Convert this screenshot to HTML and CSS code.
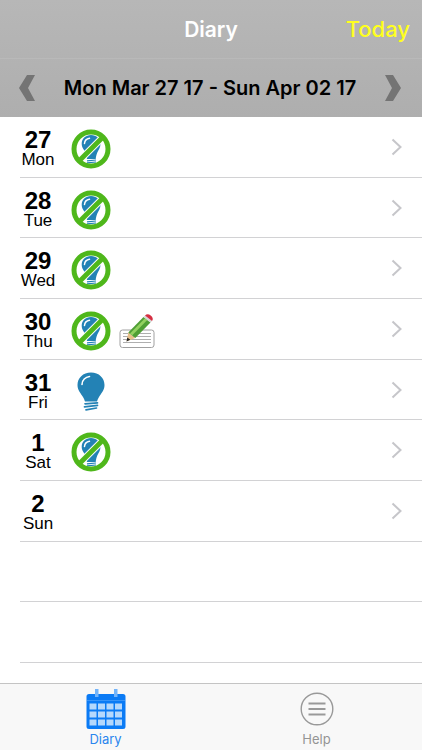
FILE: index.html
```html
<!DOCTYPE html>
<html lang="en">
<head>
    <meta charset="UTF-8">
    <meta name="viewport" content="width=device-width, initial-scale=1.0">
    <title>Diary</title>
    <link rel="stylesheet" href="styles.css">
</head>
<body>

    <!-- Shared icons -->
    <svg class="sprite" aria-hidden="true">
        <symbol id="bulb" viewBox="0 0 40 40">
            <path d="M20 .5C12 .5 6.500 6 6.500 13c0 5.500 3.500 8.500 5.500 12 1 1.700 1.500 3 2 4.500h12c.5-1.500 1-2.800 2-4.500 2-3.500 5.500-6.500 5.500-12C33.500 6 28 .5 20 .5z" fill="#2382b5"/>
            <path d="M11 12.500c0-4.500 3.500-7.500 7.500-8" fill="none" stroke="#fff" stroke-width="1.600" stroke-linecap="round"/>
            <path d="M14 31.800l12.500-1M13.500 34.800l13-1.500M15 37.800l10.500-1.800" fill="none" stroke="#2382b5" stroke-width="1.700" stroke-linecap="round"/>
        </symbol>
        <symbol id="no-bulb" viewBox="0 0 40 40">
            <path d="M20 6c-5.500 0-9.300 3.700-9.300 8.800 0 4 2.700 6.200 4 9.200.8 1.800 1 4 1.200 6h8.800c.3-2.500.7-4.300 1.500-6.300 1.200-2.800 3.300-5 3.300-8.700 0-5.300-4-9-9.500-9z" fill="#2382b5"/>
            <path d="M13.500 14.500c.3-3 2.300-4.800 5-5.200" fill="none" stroke="#fff" stroke-width="1.500" stroke-linecap="round"/>
            <path d="M16 31.800l9-.8M16 33.800l9-.8" fill="none" stroke="#2382b5" stroke-width="1.200"/>
            <path d="M32 8L8 32" stroke="#fff" stroke-width="6.800"/>
            <circle cx="20" cy="20" r="17" fill="none" stroke="#4fb71b" stroke-width="5"/>
            <path d="M32 8L8 32" stroke="#4fb71b" stroke-width="5"/>
        </symbol>
        <symbol id="note" viewBox="0 0 36 36">
            <rect x="1" y="17" width="34" height="17.500" rx="2.500" fill="#fff" stroke="#a0a0a0"/>
            <path d="M4 20.500h28M4 23.500h28M4 26.500h28M4 29.500h28" stroke="#9b9b9b" stroke-width=".8"/>
            <path d="M7.500 28.500l1.800-9 7 5.500z" fill="#e8c08a"/>
            <path d="M7.500 28.500l.8-4 3 2.200z" fill="#222"/>
            <path d="M9.300 19.500L24.500 4l7 5.500-15.200 15.500z" fill="#4f9f35"/>
            <path d="M11 20.500L26 5.200l2.300 1.800-15 15.300z" fill="#92d160"/>
            <path d="M24.500 4l1.500-1.500 7 5.500-1.500 1.500z" fill="#d5d5d5"/>
            <path d="M26 2.500c1.600-1.700 3.600-1.700 5.700-.1s2.800 3.700 1.300 5.600z" fill="#d52f42"/>
        </symbol>
        <symbol id="chevron" viewBox="0 0 12 18">
            <path d="M1.500 1.500L9.500 9l-8 7.500" fill="none" stroke="#c6c6ca" stroke-width="2"/>
        </symbol>
        <symbol id="arrow" viewBox="0 0 16 26">
            <path d="M0 0h8l8 13-8 13H0l7-13z" fill="#747474"/>
        </symbol>
    </svg>

    <div class="app">
        <header class="header">
            <div class="navbar">
                <h1 class="title">Diary</h1>
                <button type="button" class="today">Today</button>
            </div>
            <div class="week">
                <button type="button" class="week-btn" aria-label="Previous week">
                    <svg class="arrow arrow-prev"><use href="#arrow"/></svg>
                </button>
                <h2 class="range">Mon Mar 27 17 - Sun Apr 02 17</h2>
                <button type="button" class="week-btn" aria-label="Next week">
                    <svg class="arrow"><use href="#arrow"/></svg>
                </button>
            </div>
        </header>

        <!-- Days of the week -->
        <main class="days">
            <a class="day" href="#">
                <span class="date"><b class="num">27</b><span class="name">Mon</span></span>
                <svg class="status"><use href="#no-bulb"/></svg>
                <svg class="chevron"><use href="#chevron"/></svg>
            </a>
            <a class="day" href="#">
                <span class="date"><b class="num">28</b><span class="name">Tue</span></span>
                <svg class="status"><use href="#no-bulb"/></svg>
                <svg class="chevron"><use href="#chevron"/></svg>
            </a>
            <a class="day" href="#">
                <span class="date"><b class="num">29</b><span class="name">Wed</span></span>
                <svg class="status"><use href="#no-bulb"/></svg>
                <svg class="chevron"><use href="#chevron"/></svg>
            </a>
            <a class="day" href="#">
                <span class="date"><b class="num">30</b><span class="name">Thu</span></span>
                <svg class="status"><use href="#no-bulb"/></svg>
                <svg class="note"><use href="#note"/></svg>
                <svg class="chevron"><use href="#chevron"/></svg>
            </a>
            <a class="day" href="#">
                <span class="date"><b class="num">31</b><span class="name">Fri</span></span>
                <svg class="status"><use href="#bulb"/></svg>
                <svg class="chevron"><use href="#chevron"/></svg>
            </a>
            <a class="day" href="#">
                <span class="date"><b class="num">1</b><span class="name">Sat</span></span>
                <svg class="status"><use href="#no-bulb"/></svg>
                <svg class="chevron"><use href="#chevron"/></svg>
            </a>
            <a class="day" href="#">
                <span class="date"><b class="num">2</b><span class="name">Sun</span></span>
                <svg class="chevron"><use href="#chevron"/></svg>
            </a>
            <div class="day"></div>
            <div class="day"></div>
            <div class="rest"></div>
        </main>

        <nav class="tabs">
            <a class="tab active" href="#">
                <svg class="tab-icon" viewBox="0 0 40 40">
                    <path d="M3 5h34a2.500 2.500 0 0 1 2.500 2.500v30A2.500 2.500 0 0 1 37 40H3a2.500 2.500 0 0 1-2.500-2.500v-30A2.500 2.500 0 0 1 3 5z" fill="#0b7bf5"/>
                    <path d="M1 11.500h38" stroke="#3995f8"/>
                    <path d="M9 0h3.500v8H9zM28 0h3.500v8H28z" fill="#73b4fa"/>
                    <path d="M3.500 14.500h7v6h-7zM12 14.500h7v6h-7zM20.500 14.500h7v6h-7zM29 14.500h7v6h-7zM3.500 22.500h7v6h-7zM12 22.500h7v6h-7zM20.500 22.500h7v6h-7zM29 22.500h7v6h-7zM3.500 30.500h7v6h-7zM12 30.500h7v6h-7zM20.500 30.500h7v6h-7zM29 30.500h7v6h-7z" fill="#b5d8fc"/>
                </svg>
                <span>Diary</span>
            </a>
            <a class="tab" href="#">
                <svg class="tab-icon" viewBox="0 0 40 40">
                    <g fill="none" stroke="#999">
                        <circle cx="20" cy="20" r="15.800" stroke-width="1.400"/>
                        <path d="M11.500 14.500h17M11.500 20h17M11.500 25.500h17" stroke-width="1.800"/>
                    </g>
                </svg>
                <span>Help</span>
            </a>
        </nav>
    </div>

</body>
</html>
```
FILE: styles.css
```css
body {
    margin: 0;
    font-family: "Liberation Sans", Arial, sans-serif;
    color: #000;
    background-color: #fff;
}
a {
    color: inherit;
    text-decoration: none;
}
button {
    padding: 0;
    border: none;
    background: none;
    cursor: pointer;
}
.sprite {
    display: none;
}
.app {
    display: flex;
    flex-direction: column;
    min-height: 100vh;
}

/* Header */
.header {
    background: linear-gradient(#b7b7b7, #aeaeae);
    font-family: Inter, sans-serif;
}
.navbar {
    display: grid;
    grid-template-columns: 1fr auto 1fr;
    align-items: center;
    height: 58px;
    padding: 0 12px;
    border-bottom: 1px solid #b9b9b9;
}
.title {
    grid-column: 2;
    margin: 0;
    font-size: 21px;
    font-weight: 600;
    color: #fff;
}
.today {
    justify-self: end;
    font-family: inherit;
    font-size: 22px;
    font-weight: 500;
    color: #ffff1e;
}
.week {
    display: flex;
    align-items: center;
    justify-content: space-between;
    height: 58px;
    padding: 0 21px 0 19px;
}
.week-btn {
    display: flex;
}
.arrow {
    width: 16px;
    height: 26px;
}
.arrow-prev {
    transform: scaleX(-1);
}
.range {
    margin: 0;
    font-size: 20px;
    font-weight: 600;
    white-space: nowrap;
}

/* Day list */
.days {
    flex: 1;
    display: flex;
    flex-direction: column;
}
.day {
    flex: 3 0 0px;
    display: flex;
    align-items: center;
    min-height: 56px;
    box-sizing: border-box;
    margin-left: 20px;
    padding-right: 19px;
    border-bottom: 1px solid #d2d2d4;
}
.rest {
    flex: 1 0 0px;
}
.date {
    display: flex;
    flex-direction: column;
    align-items: center;
    width: 36px;
    margin: 4px 15px 0 0;
}
.num {
    font-size: 24px;
    line-height: 22px;
}
.name {
    font-size: 17px;
    line-height: 18px;
}
.status {
    width: 40px;
    height: 40px;
    margin-top: 4px;
}
.note {
    width: 36px;
    height: 36px;
    margin: 4px 0 0 8px;
}
.chevron {
    width: 12px;
    height: 18px;
    margin-left: auto;
}

/* Tab bar */
.tabs {
    display: flex;
    border-top: 1px solid #c4c4c4;
    background-color: #f8f8f8;
    font-family: Inter, sans-serif;
}
.tab {
    flex: 1;
    display: flex;
    flex-direction: column;
    align-items: center;
    padding: 5px 0 1px;
    font-size: 13px;
    line-height: 20px;
    color: #949494;
}
.active {
    color: #2a86ee;
}
.tab-icon {
    width: 40px;
    height: 40px;
}
```
